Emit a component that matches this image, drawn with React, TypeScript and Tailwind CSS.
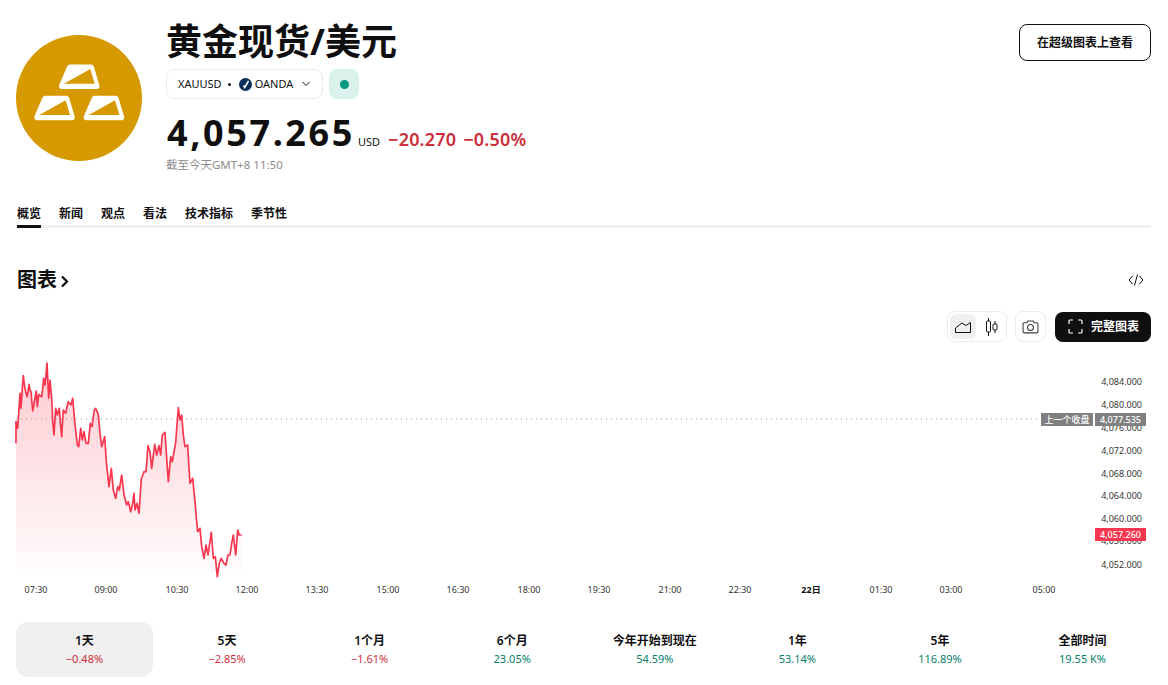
const FONT = "font-['Noto_Sans','Noto_Sans_CJK_SC',sans-serif]";

const rawPoints: [number, number][] = [
  [48,265],[48,200],[53,220],[57,160],[60,115],[63,160],[67,100],[70,62],[74,95],[78,115],[82,125],[87,88],[90,105],[93,110],[98,168],[104,135],[109,108],[112,155],[116,118],[120,122],[125,125],[128,100],[131,70],[135,90],[138,60],[141,24],[144,90],[146,130],[150,75],[155,130],[158,200],[162,240],[167,160],[172,180],[178,160],[181,200],[185,245],[190,165],[197,175],[201,155],[205,140],[213,150],[218,130],[224,200],[228,235],[232,270],[236,275],[242,220],[247,255],[252,230],[258,265],[265,265],[271,205],[276,215],[283,165],[287,160],[295,178],[300,235],[305,275],[314,245],[319,320],[323,360],[327,395],[334,340],[340,405],[347,430],[353,395],[358,405],[365,360],[372,420],[380,450],[385,440],[392,470],[398,445],[402,415],[405,465],[411,445],[417,475],[424,372],[432,350],[438,350],[444,272],[450,290],[455,340],[464,268],[470,300],[477,272],[482,300],[487,240],[495,232],[500,310],[505,380],[512,305],[517,320],[527,262],[535,158],[540,195],[545,180],[550,240],[555,275],[563,270],[567,340],[570,385],[578,370],[585,440],[590,500],[593,530],[600,520],[605,575],[612,610],[618,570],[624,600],[634,532],[640,610],[646,605],[652,665],[658,625],[664,610],[672,625],[678,630],[684,600],[690,600],[695,565],[700,540],[707,600],[713,525],[718,540],[725,540],
];
const pts = rawPoints.map(([x, y]) => [x / 3, y / 3] as const);
const line = pts.map(([x, y]) => `${x.toFixed(1)},${y.toFixed(1)}`).join(" ");
const area = `${line} ${(725 / 3).toFixed(1)},220 16,220`;

const timeLabels: [string, number, boolean?][] = [
  ["07:30", 36],["09:00", 106],["10:30", 177],["12:00", 247],["13:30", 317],["15:00", 388],["16:30", 458],["18:00", 529],["19:30", 599],["21:00", 670],["22:30", 740],["22日", 811, true],["01:30", 881],["03:00", 951],["05:00", 1044],
];
const priceLabels: [string, number][] = [
  ["4,084.000", 382],["4,080.000", 405],["4,076.000", 428],["4,072.000", 451],["4,068.000", 474],["4,064.000", 496],["4,060.000", 519],["4,056.000", 541],["4,052.000", 565],
];
const ranges: [string, string, boolean][] = [
  ["1天", "−0.48%", false],["5天", "−2.85%", false],["1个月", "−1.61%", false],["6个月", "23.05%", true],["今年开始到现在", "54.59%", true],["1年", "53.14%", true],["5年", "116.89%", true],["全部时间", "19.55 K%", true],
];
const tabs = ["概览", "新闻", "观点", "看法", "技术指标", "季节性"];

function Bar({ dx = 0, dy = 0 }: { dx?: number; dy?: number }) {
  return (
    <g transform={`translate(${dx} ${dy})`}>
      <polygon points="54,32.5 75,32.5 80.5,51 46,51" fill="#fff" stroke="#fff" strokeWidth="6" strokeLinejoin="round" />
      <polygon points="48,48.7 74.3,34 78.7,48.7" fill="#d69a00" />
    </g>
  );
}

function Logo() {
  return (
    <svg width="126" height="126" viewBox="0 0 126 126" className="shrink-0">
      <circle cx="63" cy="63" r="63" fill="#d69a00" />
      <Bar />
      <Bar dx={-24.7} dy={31.3} />
      <Bar dx={24.7} dy={31.3} />
    </svg>
  );
}

export default function App() {
  return (
    <div className={`${FONT} h-[685px] w-[1168px] overflow-hidden bg-white pl-4 pr-[17px] text-[#0f0f0f]`}>
      <header className="flex items-start justify-between">
        <div className="flex items-start">
          <div className="pt-[35px]"><Logo /></div>
          <div className="ml-[24px] pt-[19px]">
            <h1 className="text-[36px] leading-[46px] font-bold">黄金现货/美元</h1>
            <div className="mt-[4px] flex items-center gap-[6px]">
              <div className="flex h-[30px] w-[157px] items-center rounded-lg border border-[#ebebeb] pl-[11px] text-[11px]">
                <span>XAUUSD</span>
                <span className="ml-[6px] mr-[8px] h-[3px] w-[3px] rounded-full bg-[#0f0f0f]" />
                <svg width="13" height="13" viewBox="0 0 13 13" className="mr-[3px]">
                  <circle cx="6.5" cy="6.5" r="6.5" fill="#0b2d5c" />
                  <path d="M4.500 7.500l1.200 2L9.500 3" stroke="#fff" strokeWidth="1.500" fill="none" />
                </svg>
                <span>OANDA</span>
                <svg width="10" height="6" viewBox="0 0 10 6" className="ml-[8px]">
                  <path d="M1.500 1l3.500 3.500L8.500 1" stroke="#0f0f0f" strokeWidth="1" fill="none" />
                </svg>
              </div>
              <div className="flex h-[30px] w-[30px] items-center justify-center rounded-lg bg-[#daf1ec]">
                <div className="h-[9px] w-[9px] rounded-full bg-[#089981]" />
              </div>
            </div>
            <div className="mt-[11px] flex items-baseline pl-px">
              <span className="text-[36px] leading-[46px] font-bold tracking-[2.600px]">4,057.265</span>
              <span className="ml-[3px] text-[11px]">USD</span>
              <span className="ml-[8px] text-[18px] font-semibold tracking-[0.200px] text-[#cc2f3c]">−20.270</span>
              <span className="ml-[7px] text-[18px] font-semibold tracking-[0.200px] text-[#cc2f3c]">−0.50%</span>
            </div>
            <div className="mt-px text-[11.500px] leading-[16px] text-[#8c8c8c]">截至今天GMT+8 11:50</div>
          </div>
        </div>
        <button className="mt-[24px] h-[37px] w-[132px] rounded-lg border border-[#0f0f0f] text-[12px] font-semibold">在超级图表上查看</button>
      </header>

      <nav className="mt-[30px] flex h-[25px] gap-[18px] border-b-[3px] border-[#f0f0f0] pl-px">
        {tabs.map((t, i) => (
          <div key={t} className={`h-[25px] pt-[2px] text-[12px] leading-[18px] font-bold ${i === 0 ? "border-b-[3px] border-[#0f0f0f]" : ""}`}>{t}</div>
        ))}
      </nav>

      <section className="mt-[38px] flex items-center justify-between pl-px">
        <h2 className="flex items-center text-[20px] leading-[28px] font-bold">
          图表
          <svg width="9" height="13" viewBox="0 0 9 13" className="ml-[3px] mt-[2px]">
            <path d="M2 1.500l5 5-5 5" stroke="#0f0f0f" strokeWidth="2.200" fill="none" />
          </svg>
        </h2>
        <svg width="16" height="14" viewBox="0 0 16 14" className="mr-[7px]">
          <path d="M4.500 3L1 7l3.500 4M11.500 3L15 7l-3.500 4M9.500 1.500l-3 11" stroke="#0f0f0f" strokeWidth="1" fill="none" />
        </svg>
      </section>

      <div className="mt-[17px] flex items-center justify-end">
        <div className="flex h-[31px] w-[60px] items-center gap-[3px] rounded-lg border border-[#ebebeb] p-[2px]">
          <div className="flex h-[25px] w-[26px] items-center justify-center rounded-md bg-[#f0f0f0]">
            <svg width="16" height="12" viewBox="0 0 16 12">
              <path d="M0.500 11.500h15V1.500L11 4.500 7 2 0.500 7z" stroke="#0f0f0f" strokeWidth="1" fill="none" />
            </svg>
          </div>
          <div className="flex h-[25px] w-[26px] items-center justify-center">
            <svg width="13" height="18" viewBox="0 0 13 18">
              <path d="M3.500 0v18M10 3v12" stroke="#0f0f0f" strokeWidth="1" />
              <rect x="1.500" y="3" width="4" height="11" rx="1" fill="#fff" stroke="#0f0f0f" />
              <rect x="8" y="6" width="4" height="6" rx="1" fill="#fff" stroke="#0f0f0f" />
            </svg>
          </div>
        </div>
        <div className="ml-[8px] flex h-[31px] w-[31px] items-center justify-center rounded-lg border border-[#ebebeb]">
          <svg width="17" height="14" viewBox="0 0 16 13">
            <path d="M1 3.500a1 1 0 0 1 1-1h2.500L5.500 0.800h5L11.500 2.500H14a1 1 0 0 1 1 1V11a1 1 0 0 1-1 1H2a1 1 0 0 1-1-1z" stroke="#3d3d3d" strokeWidth="1" fill="none" />
            <circle cx="8" cy="7" r="2.800" stroke="#3d3d3d" strokeWidth="1" fill="none" />
          </svg>
        </div>
        <button className="ml-[9px] flex h-[30px] w-[96px] items-center justify-center gap-[8px] rounded-lg bg-[#0f0f0f] pl-px text-[12px] font-bold text-white">
          <svg width="15" height="15" viewBox="0 0 15 15">
            <path d="M1 5V2a1 1 0 0 1 1-1h3M10 1h3a1 1 0 0 1 1 1v3M14 10v3a1 1 0 0 1-1 1h-3M5 14H2a1 1 0 0 1-1-1v-3" stroke="#fff" strokeWidth="1.200" fill="none" />
          </svg>
          完整图表
        </button>
      </div>

      <div className="relative -ml-4 mt-[13px] h-[245px] w-[1168px]">
        <svg width="1168" height="245" viewBox="0 0 1168 245" className="absolute left-0 top-0">
          <defs>
            <linearGradient id="fade" x1="0" y1="0" x2="0" y2="1">
              <stop offset="0" stopColor="#f7374f" stopOpacity="0.26" />
              <stop offset="1" stopColor="#f7374f" stopOpacity="0.01" />
            </linearGradient>
          </defs>
          <polygon points={area} fill="url(#fade)" />
          <line x1="16" y1="64" x2="1041" y2="64" stroke="#9a9a9a" strokeWidth="1" strokeDasharray="1 4" />
          <polyline points={line} fill="none" stroke="#f7374f" strokeWidth="1.700" strokeLinejoin="round" />
        </svg>
        {priceLabels.map(([t, y]) => (
          <span key={t} className="absolute right-[26px] text-[9px] leading-[12px] text-[#333]" style={{ top: y - 361 }}>{t}</span>
        ))}
        {timeLabels.map(([t, x, b]) => (
          <span key={t} className={`absolute w-[40px] -translate-x-1/2 text-center text-[9px] leading-[12px] ${b ? "font-bold text-[#0f0f0f]" : "text-[#333]"}`} style={{ left: x, top: 229 }}>{t}</span>
        ))}
        <div className="absolute left-[1041px] top-[58px] h-[13px] w-[52px] bg-[#808080] text-center text-[9px] leading-[13px] font-medium text-white">上一个收盘</div>
        <div className="absolute left-[1095px] top-[58px] h-[13px] w-[51px] bg-[#808080] text-center text-[9px] leading-[13px] font-medium text-white">4,077.535</div>
        <div className="absolute left-[1095px] top-[173px] h-[13px] w-[51px] bg-[#f7374f] text-center text-[9px] leading-[13px] font-medium text-white">4,057.260</div>
      </div>

      <div className="mt-[22px] grid grid-cols-8 gap-[5.700px]">
        {ranges.map(([a, b, up], i) => (
          <div key={a} className={`flex h-[55px] flex-col items-center justify-center rounded-xl ${i === 0 ? "bg-[#f0f0f0]" : ""}`}>
            <div className="-mt-[1px] text-[12px] leading-[18px] font-semibold">{a}</div>
            <div className={`mt-[1px] text-[11px] leading-[16px] ${up ? "text-[#06806b]" : "text-[#cc2f3c]"}`}>{b}</div>
          </div>
        ))}
      </div>
    </div>
  );
}
